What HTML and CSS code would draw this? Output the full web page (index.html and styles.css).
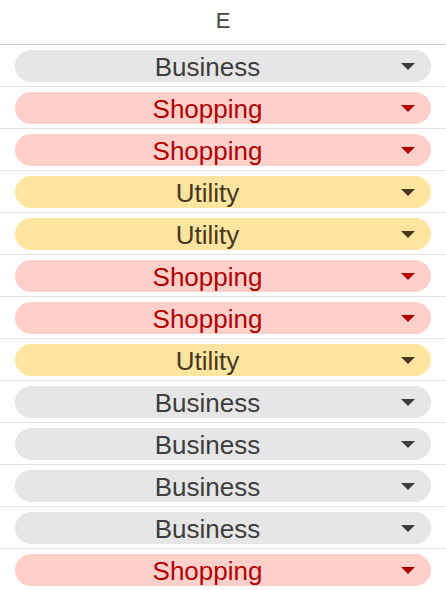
FILE: index.html
```html
<!DOCTYPE html>
<html>
<head>
<meta charset="utf-8">
<link rel="stylesheet" href="styles.css">
</head>
<body>
<div class="sheet">
  <div class="header">E</div>
  <div class="row"><div class="chip gray"><span class="label">Business</span><span class="arrow"></span></div></div>
  <div class="row"><div class="chip pink"><span class="label">Shopping</span><span class="arrow"></span></div></div>
  <div class="row"><div class="chip pink"><span class="label">Shopping</span><span class="arrow"></span></div></div>
  <div class="row"><div class="chip yellow"><span class="label">Utility</span><span class="arrow"></span></div></div>
  <div class="row"><div class="chip yellow"><span class="label">Utility</span><span class="arrow"></span></div></div>
  <div class="row"><div class="chip pink"><span class="label">Shopping</span><span class="arrow"></span></div></div>
  <div class="row"><div class="chip pink"><span class="label">Shopping</span><span class="arrow"></span></div></div>
  <div class="row"><div class="chip yellow"><span class="label">Utility</span><span class="arrow"></span></div></div>
  <div class="row"><div class="chip gray"><span class="label">Business</span><span class="arrow"></span></div></div>
  <div class="row"><div class="chip gray"><span class="label">Business</span><span class="arrow"></span></div></div>
  <div class="row"><div class="chip gray"><span class="label">Business</span><span class="arrow"></span></div></div>
  <div class="row"><div class="chip gray"><span class="label">Business</span><span class="arrow"></span></div></div>
  <div class="row"><div class="chip pink"><span class="label">Shopping</span><span class="arrow"></span></div></div>
</div>
</body>
</html>
```
FILE: styles.css
```css
html, body {
  margin: 0;
  padding: 0;
  background: #ffffff;
}
.sheet {
  width: 446px;
  font-family: "Liberation Sans", Arial, sans-serif;
}
.header {
  height: 44px;
  line-height: 42px;
  text-align: center;
  font-size: 22px;
  color: #444444;
  border-bottom: 1px solid #c6c6c6;
}
.row {
  padding: 5px 15px 4px 15px;
  border-bottom: 1px solid #e2e2e2;
}
.chip {
  height: 32px;
  border-radius: 16px;
  display: flex;
  align-items: center;
}
.label {
  flex: 1;
  text-align: center;
  font-size: 26px;
  line-height: 32px;
  padding-top: 1px;
  height: 32px;
  box-sizing: border-box;
  overflow: visible;
}
.arrow {
  width: 31px;
  height: 32px;
  display: flex;
  align-items: center;
  justify-content: flex-start;
}
.arrow::before {
  content: "";
  width: 0;
  height: 0;
  margin-left: 1px;
  margin-top: 0;
  border-left: 7px solid transparent;
  border-right: 7px solid transparent;
  border-top: 7px solid currentColor;
}
.gray { background: #e6e6e6; color: #3d3d3d; }
.pink { background: #ffcfc9; color: #b10202; }
.yellow { background: #ffe5a0; color: #473821; }
```
